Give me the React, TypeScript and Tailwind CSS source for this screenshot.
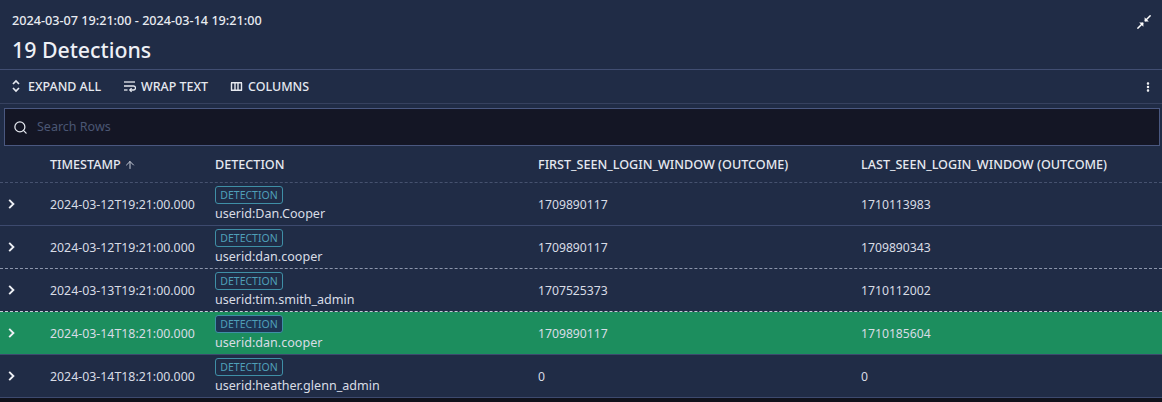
import { Search, ArrowUp, EllipsisVertical } from "lucide-react";

const rows = [
  { ts: "2024-03-12T19:21:00.000", user: "userid:Dan.Cooper", first: "1709890117", last: "1710113983", border: "border-b border-solid border-[#3d4a6e]" },
  { ts: "2024-03-12T19:21:00.000", user: "userid:dan.cooper", first: "1709890117", last: "1709890343", border: "border-b border-dashed border-[#8d96ac]" },
  { ts: "2024-03-13T19:21:00.000", user: "userid:tim.smith_admin", first: "1707525373", last: "1710112002", border: "border-b border-dashed border-[#c5cad6]" },
  { ts: "2024-03-14T18:21:00.000", user: "userid:dan.cooper", first: "1709890117", last: "1710185604", border: "border-b border-solid border-[#3d4a6e]", active: true },
  { ts: "2024-03-14T18:21:00.000", user: "userid:heather.glenn_admin", first: "0", last: "0", border: "border-b border-solid border-[#3d4a6e]" },
];

function ToolButton({ icon, label }: { icon: React.ReactNode; label: string }) {
  return (
    <div className="flex items-center gap-[5px]">
      {icon}
      <span className="pt-px text-[12.45px] font-medium text-[#e6e9f0]">{label}</span>
    </div>
  );
}

function ExpandIcon() {
  return (
    <svg viewBox="0 0 14 14" className="h-[14px] w-[14px]" fill="none" stroke="currentColor" strokeWidth="1.7">
      <polyline points="4,5 7,2 10,5" />
      <polyline points="4,9 7,12 10,9" />
    </svg>
  );
}

function WrapIcon() {
  return (
    <svg viewBox="0 0 13 13" className="h-[13px] w-[13px]" fill="none" stroke="currentColor" strokeWidth="1.3">
      <path d="M1 2h11" />
      <path d="M1 6h9.5a1.6 1.6 0 0 1 0 4H7" />
      <path d="M8.6 8.2 6.8 10l1.8 1.8" />
      <path d="M1 10h3.5" />
    </svg>
  );
}

function ColumnsIcon() {
  return (
    <svg viewBox="0 0 13 13" className="h-[13px] w-[13px]" fill="none" stroke="currentColor">
      <path d="M1.5 3v7.5M5 3v7.5M8 3v7.5M11.5 3v7.5" strokeWidth="1.4" />
      <path d="M1 2.7h11M1 10.3h11" strokeWidth="1.4" />
    </svg>
  );
}

function CollapseIcon() {
  return (
    <svg viewBox="0 0 14 14" className="absolute right-[11px] top-[15px] h-[14px] w-[14px] text-white" fill="none" stroke="currentColor" strokeWidth="1.5">
      <path d="M13.6 0.4 8 6" />
      <path d="M0.4 13.6 6 8" />
      <polygon points="7.6,2.2 7.6,6.4 11.8,6.4" fill="currentColor" stroke="none" />
      <polygon points="2.2,7.6 6.4,7.6 6.4,11.8" fill="currentColor" stroke="none" />
    </svg>
  );
}

function RowChevron() {
  return (
    <svg viewBox="0 0 7 10" className="h-[10px] w-[7px] text-[#eef0f5]" fill="none" stroke="currentColor" strokeWidth="1.9">
      <polyline points="1.2,0.8 5.4,5 1.2,9.2" />
    </svg>
  );
}

export default function App() {
  return (
    <div className="h-[402px] w-[1162px] overflow-hidden bg-[#202c46] font-['Noto_Sans',sans-serif] text-[#e6e9f0]">
      {/* Header */}
      <div className="relative h-[70px] border-b border-[#414e72] pl-3 pt-[10px]">
        <div className="pt-px text-[12.65px] font-medium leading-[18px] text-[#e8ebf1]">2024-03-07 19:21:00 - 2024-03-14 19:21:00</div>
        <h1 className="mt-[6px] text-[21.3px] font-medium leading-[30px] text-[#eef0f5]">19 Detections</h1>
        <CollapseIcon />
      </div>

      {/* Toolbar */}
      <div className="flex h-[34px] items-center border-b border-[#36415f] pl-[9px] pr-[8px]">
        <div className="flex items-center gap-[22px]">
          <ToolButton icon={<ExpandIcon />} label="EXPAND ALL" />
          <ToolButton icon={<WrapIcon />} label="WRAP TEXT" />
          <ToolButton icon={<ColumnsIcon />} label="COLUMNS" />
        </div>
        <EllipsisVertical className="ml-auto h-[12px] w-[12px] text-white" strokeWidth={3} />
      </div>

      {/* Search */}
      <div className="pl-[4px] pr-[2px] pt-[4px]">
        <div className="flex h-[38px] items-center gap-[9px] border border-[#4a5880] bg-[#141625] pl-[8px]">
          <Search className="h-[15px] w-[15px] text-[#e6e9f0]" strokeWidth={2} />
          <span className="text-[12.5px] text-[#4b5674]">Search Rows</span>
        </div>
      </div>

      {/* Column headers */}
      <div className="flex h-[37px] items-center border-b border-dashed border-[#46526f] pt-[2px] text-[12.6px] font-medium text-[#e6e9f0]">
        <div className="flex w-[215px] items-center gap-[3px] pl-[50px]">
          TIMESTAMP
          <ArrowUp className="h-[12px] w-[12px] text-[#c5cad6]" strokeWidth={2} />
        </div>
        <div className="w-[323px]">DETECTION</div>
        <div className="w-[323px]">FIRST_SEEN_LOGIN_WINDOW (OUTCOME)</div>
        <div>LAST_SEEN_LOGIN_WINDOW (OUTCOME)</div>
      </div>

      {/* Rows */}
      {rows.map((row, i) => (
        <div key={i} className={`flex h-[43px] items-center text-[12.2px] text-[#d8dce5] ${row.border} ${row.active ? "bg-[#1c8e5e]" : ""}`}>
          <div className="w-[50px] pl-[8px]">
            <RowChevron />
          </div>
          <div className="w-[165px] pt-[2px] text-[12.35px]">{row.ts}</div>
          <div className="flex w-[323px] flex-col items-start self-start pt-[3px]">
            <span className={`flex h-[18px] w-[68px] items-center justify-center rounded-[3px] border border-[#3f8fa6] pt-px text-[10.5px] text-[#4f9fb8] ${row.active ? "bg-[#1d3454]" : ""}`}>DETECTION</span>
            <span className="mt-px text-[12.55px] leading-[18px]">{row.user}</span>
          </div>
          <div className="w-[323px] pt-[2px]">{row.first}</div>
          <div className="pt-[2px]">{row.last}</div>
        </div>
      ))}
      <div className="h-full bg-[#10121c]" />
    </div>
  );
}
